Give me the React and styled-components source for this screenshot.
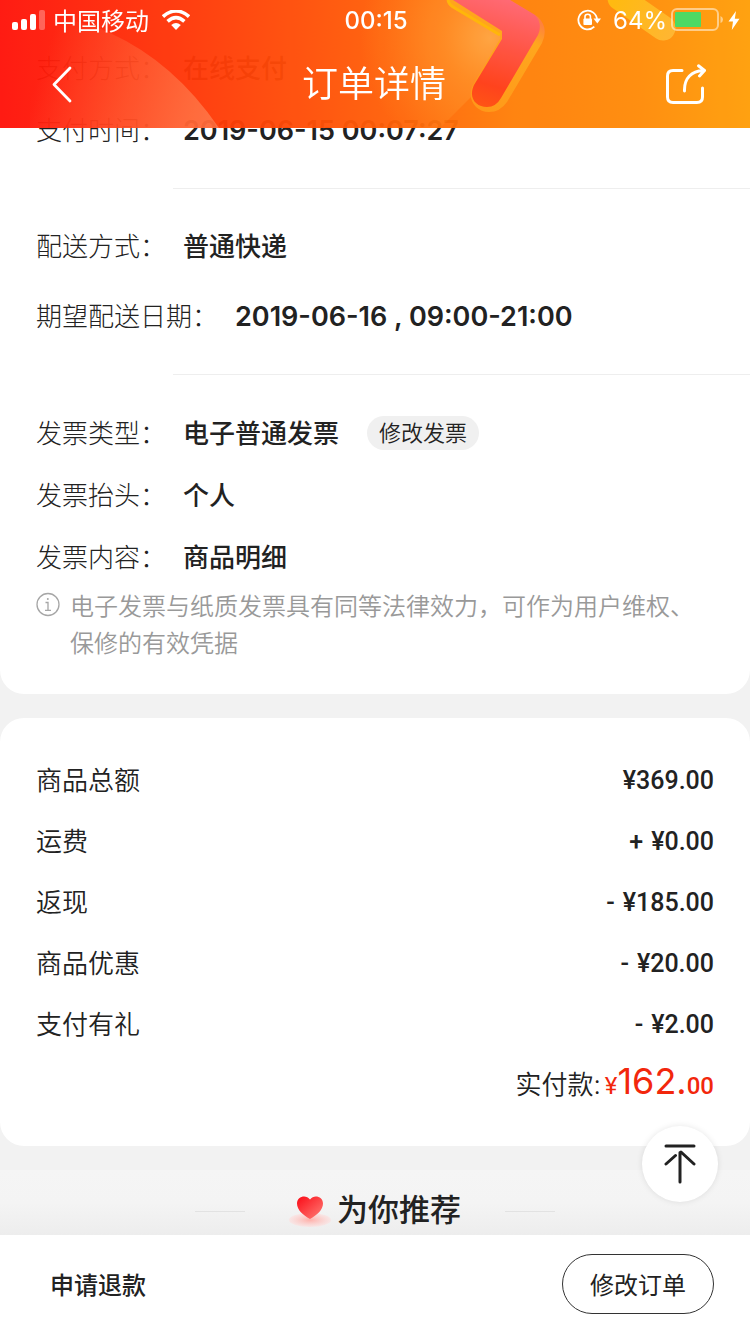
import React from 'react'
import styled, { createGlobalStyle, css } from 'styled-components'

const GlobalStyle = createGlobalStyle`
  * {
    box-sizing: border-box;
  }

  body {
    margin: 0;
    background: #f2f2f2;
    color: #222;
    font-family: Inter, 'Noto Sans CJK SC', sans-serif;
    font-size: 26px;
  }

  button {
    padding: 0;
    border: 0;
    background: none;
    color: inherit;
    font: inherit;
  }
`

const Page = styled.div`
  display: flex;
  flex-direction: column;
  min-height: 100vh;
`

const Header = styled.header`
  position: fixed;
  top: 0;
  left: 0;
  right: 0;
  z-index: 2;
  color: #fff;
`

const Backdrop = styled.svg`
  position: absolute;
  inset: 0;
  width: 100%;
  height: 100%;
  opacity: 0.96;
`

const StatusBar = styled.div`
  position: relative;
  display: grid;
  grid-template-columns: 1fr auto 1fr;
  align-items: center;
  height: 40px;
  padding: 0 10px 0 12px;
  font-size: 24px;
`

const StatusGroup = styled.div`
  display: flex;
  align-items: center;
  justify-content: ${props => props.align};
  gap: ${props => props.gap};
`

const Carrier = styled.span`
  margin-right: 6px;
  padding-bottom: 2px;
`

const Clock = styled.time`
  font-size: 24px;
  font-weight: 500;
`

const Percent = styled.span`
  margin-left: 8px;
`

const NavBar = styled.div`
  position: relative;
  display: flex;
  align-items: center;
  justify-content: space-between;
  height: 88px;
  padding: 0 44px 0 42px;
`

const Title = styled.h1`
  margin: 0;
  font-size: 36px;
  font-weight: 350;
  line-height: 44px;
`

const IconButton = styled.button`
  display: flex;
  align-items: center;
  justify-content: center;
  width: 40px;
  height: 40px;
`

const Card = styled.section`
  background: #fff;
  border-radius: 24px;
  padding: 32px 0 35px;
`

const DetailCard = styled(Card)`
  margin-bottom: 24px;
  border-top-left-radius: 0;
  border-top-right-radius: 0;
  padding: 37px 0 32px;
`

const Group = styled.dl`
  margin: 0;
  padding: ${props => props.$pad};
`

const Row = styled.div`
  display: flex;
  align-items: center;
  height: ${props => (props.$tall ? '70px' : '62px')};
  padding: 0 36px;
`

const Label = styled.dt`
  margin-right: 17px;
  padding-bottom: 4px;
  font-weight: 300;
`

const Value = styled.dd`
  margin: 0;
  padding-bottom: ${props => (props.$numeric ? '0' : '4px')};
  font-size: ${props => (props.$numeric ? '27px' : '26px')};
  font-weight: ${props => (props.$numeric ? 600 : 500)};
`

const Divider = styled.hr`
  height: 1px;
  margin: 0 0 0 173px;
  border: 0;
  background: #eee;
`

const Pill = styled.button`
  height: 34px;
  margin-left: 28px;
  padding: 0 12px;
  border-radius: 17px;
  background: #f0f0f0;
  font-size: 22px;
  font-weight: 350;
  line-height: 34px;
`

const Note = styled.div`
  display: flex;
  gap: 10px;
  padding: 0 36px;
  color: #999;
  font-size: 24px;
  font-weight: 350;
  line-height: 37px;

  svg {
    flex: none;
    margin-top: 4px;
  }

  p {
    margin: 0;
  }
`

const Prices = styled.dl`
  margin: 0;
`

const PriceRow = styled.div`
  display: flex;
  align-items: center;
  justify-content: space-between;
  height: 61px;
  padding: 0 36px;
`

const PriceLabel = styled.dt`
  padding-bottom: 4px;
  font-weight: 350;
`

const priceFont = css`
  font-family: Roboto, 'Noto Sans CJK SC', sans-serif;
`

const Amount = styled.dd`
  ${priceFont} display: flex;
  gap: 8px;
  margin: 0;
  font-size: 25px;
  font-weight: 500;
`

const TotalRow = styled.div`
  display: flex;
  align-items: baseline;
  justify-content: flex-end;
  gap: 4px;
  height: 56px;
  padding: 0 36px;
  line-height: 52px;
`

const Total = styled.dd`
  ${priceFont} margin: 0;
  color: #f2270c;
  font-size: 24px;
`

const TotalInt = styled.span`
  font-family: Inter, sans-serif;
  font-size: 36px;
`

const TotalCents = styled.span`
  font-weight: 500;
`

const Recommend = styled.section`
  display: flex;
  flex: 1;
  align-items: flex-start;
  justify-content: center;
  gap: 44px;
  min-height: 65px;
  margin-top: 24px;
  padding-top: 20px;
  background: linear-gradient(#f5f5f5, #f4f4f4 50%, #ededed);
`

const Rule = styled.span`
  width: 50px;
  height: 1px;
  margin-top: 21px;
  background: #e2e2e2;
`

const RecommendTitle = styled.h2`
  display: flex;
  align-items: center;
  gap: 4px;
  margin: 0;
  font-size: 31px;
  font-weight: 500;
  line-height: 40px;
`

const Footer = styled.footer`
  position: sticky;
  bottom: 0;
  display: flex;
  align-items: center;
  justify-content: space-between;
  height: 99px;
  padding: 0 36px 2px 50px;
  background: #fff;
  font-size: 24px;
`

const RefundButton = styled.button`
  font-weight: 500;
`

const OutlineButton = styled.button`
  height: 60px;
  padding: 0 27px;
  border: 1px solid #333;
  border-radius: 30px;
`

const TopButton = styled.button`
  position: fixed;
  right: 32px;
  bottom: 132px;
  z-index: 1;
  display: flex;
  align-items: center;
  justify-content: center;
  width: 76px;
  height: 76px;
  border-radius: 50%;
  background: #fff;
  box-shadow: 0 0 6px rgba(0, 0, 0, 0.1);
`

const HeaderArt = () => (
  <Backdrop viewBox="0 0 750 128" preserveAspectRatio="none" aria-hidden="true">
    <defs>
      <linearGradient id="sky" gradientUnits="userSpaceOnUse" x1="0" y1="70" x2="750" y2="30">
        <stop offset="0" stopColor="#ff120a" />
        <stop offset="0.2" stopColor="#ff3008" />
        <stop offset="0.38" stopColor="#ff4b08" />
        <stop offset="0.54" stopColor="#ff6408" />
        <stop offset="0.68" stopColor="#ff7f08" />
        <stop offset="0.85" stopColor="#ff8b08" />
        <stop offset="1" stopColor="#ff9f08" />
      </linearGradient>
      <radialGradient id="glow" gradientUnits="userSpaceOnUse" cx="490" cy="38" r="130">
        <stop offset="0" stopColor="#ffa23c" />
        <stop offset="0.35" stopColor="#ff9428" stopOpacity="0.65" />
        <stop offset="1" stopColor="#ff8a18" stopOpacity="0" />
      </radialGradient>
      <linearGradient id="orb" gradientUnits="userSpaceOnUse" x1="40" y1="70" x2="205" y2="128">
        <stop offset="0" stopColor="#ff7a4a" stopOpacity="0" />
        <stop offset="1" stopColor="#ff7a4a" stopOpacity="0.75" />
      </linearGradient>
      <linearGradient id="arm" gradientUnits="userSpaceOnUse" x1="510" y1="0" x2="480" y2="105">
        <stop offset="0" stopColor="#ff6470" />
        <stop offset="0.4" stopColor="#ff5040" />
        <stop offset="0.8" stopColor="#ff3c14" />
        <stop offset="1" stopColor="#ff4c0c" />
      </linearGradient>
      <linearGradient id="bevel" gradientUnits="userSpaceOnUse" x1="545" y1="15" x2="480" y2="112">
        <stop offset="0" stopColor="#ff6a48" />
        <stop offset="0.25" stopColor="#ffa414" />
        <stop offset="1" stopColor="#ff9410" />
      </linearGradient>
      <linearGradient id="capsule" gradientUnits="userSpaceOnUse" x1="615" y1="0" x2="672" y2="36">
        <stop offset="0" stopColor="#ffb808" />
        <stop offset="1" stopColor="#ffb42a" />
      </linearGradient>
    </defs>
    <rect width="750" height="128" fill="url(#sky)" />
    <path d="M350 0H510V36L478 90L440 128H350Z" fill="url(#glow)" />
    <path d="M30 128V20Q70 14 110 33Q174 62 219 128Z" fill="url(#orb)" />
    <path
      d="M447 0C448 5 450 7 454 9L500 35V39L473 85C466 99 476 112 489 112Q500 112 507 102L542 43Q549 28 538 17L510 0Z"
      fill="url(#bevel)"
    />
    <path d="M448 0Q449 5 455 8L500 35" fill="none" stroke="#ffb400" strokeWidth="3" />
    <path
      d="M453 0L502 31V39L474 85C468 98 476 107 487 107Q496 107 501 98L538 35Q543 24 535 15L510 0Z"
      fill="url(#arm)"
    />
    <path d="M620 -2L663 28" stroke="url(#capsule)" strokeWidth="25" strokeLinecap="round" />
  </Backdrop>
)

const SignalIcon = () => (
  <svg width="34" height="20" viewBox="0 0 34 20" fill="#fff" aria-hidden="true">
    <rect x="0" y="12" width="6" height="8" rx="2" />
    <rect x="9" y="9" width="6" height="11" rx="2" />
    <rect x="18" y="4" width="6" height="16" rx="2" />
    <rect x="27" y="0" width="6" height="20" rx="2" opacity="0.3" />
  </svg>
)

const WifiIcon = () => (
  <svg width="28" height="20" viewBox="0 0 28 20" fill="none" stroke="#fff" aria-hidden="true">
    <path d="M1 6.6Q14 -4.6 27 6.6" strokeWidth="3.6" />
    <path d="M5.6 11.4Q14 4 22.4 11.4" strokeWidth="3.6" />
    <path d="M9.2 15Q14 11 18.8 15L14 20Z" fill="#fff" stroke="none" />
  </svg>
)

const LockIcon = () => (
  <svg width="24" height="22" viewBox="0 0 24 22" fill="none" stroke="#fff" aria-hidden="true">
    <path d="M20 11A9.3 9.3 0 1 0 17.3 17.6" strokeWidth="1.8" />
    <path d="M16.5 9.5H24L20.3 14.5Z" fill="#fff" stroke="none" />
    <rect x="6.4" y="9.5" width="8.6" height="6.5" rx="1" fill="#fff" stroke="none" />
    <path d="M8 10V7.6Q8 5.2 10.7 5.2T13.4 7.6V10" strokeWidth="1.6" />
  </svg>
)

const BatteryIcon = () => (
  <svg width="53" height="24" viewBox="0 0 53 24" aria-hidden="true">
    <rect x="1" y="1" width="46" height="21" rx="5" fill="none" stroke="#fff" strokeOpacity="0.5" strokeWidth="2" />
    <rect x="4" y="4" width="26" height="15" rx="1" fill="#4cd964" />
    <path d="M49.5 8Q52 9 52 11.5T49.5 15Z" fill="#fff" fillOpacity="0.5" />
  </svg>
)

const BoltIcon = () => (
  <svg width="12" height="19" viewBox="0 0 12 19" fill="#fff" aria-hidden="true">
    <path d="M8 0L0.5 10.5H5L3.8 19L11.5 7.8H6.8Z" />
  </svg>
)

const BackIcon = () => (
  <svg width="20" height="37" viewBox="0 0 20 37" fill="none" stroke="#fff" strokeWidth="2.8" strokeLinecap="round" strokeLinejoin="round">
    <path d="M18 2L2 18.5L18 35" />
  </svg>
)

const ShareIcon = () => (
  <svg width="40" height="40" viewBox="0 0 40 40" fill="none" stroke="#fff" strokeWidth="3" strokeLinecap="round" strokeLinejoin="round">
    <path d="M16 6.5H7Q1.5 6.5 1.5 12V33Q1.5 38.5 7 38.5H31Q36.5 38.5 36.5 33V24" />
    <path d="M18.5 27C18 14 26 7 37 6.5M32.5 1.8L38.5 6.5L33.5 12" />
  </svg>
)

const InfoIcon = () => (
  <svg width="24" height="25" viewBox="0 0 24 25" fill="none" stroke="#a6a6a6" strokeWidth="1.3" aria-hidden="true">
    <circle cx="12" cy="12.5" r="11" />
    <path d="M9.5 10.5H12V18M9 18.3H15" />
    <circle cx="11.8" cy="7" r="1" fill="#a6a6a6" stroke="none" />
  </svg>
)

const HeartIcon = () => (
  <svg width="44" height="36" viewBox="0 0 44 36" aria-hidden="true">
    <defs>
      <linearGradient id="heart" x1="0" y1="0" x2="1" y2="1">
        <stop offset="0.1" stopColor="#fb1620" />
        <stop offset="1" stopColor="#ff8078" />
      </linearGradient>
      <radialGradient id="puddle">
        <stop offset="0" stopColor="#ffb0aa" />
        <stop offset="1" stopColor="#fbe2e1" stopOpacity="0.7" />
      </radialGradient>
    </defs>
    <ellipse cx="21" cy="28" rx="21" ry="7" fill="url(#puddle)" />
    <path
      d="M21 27C14 23 8 18 8 11.5C8 4.5 17 2 21 7.500C25 2 34 4.5 34 11.5C34 18 28 23 21 27Z"
      fill="url(#heart)"
    />
  </svg>
)

const TopIcon = () => (
  <svg width="32" height="40" viewBox="0 0 32 40" fill="none" stroke="#222" strokeWidth="3" strokeLinecap="round">
    <path d="M2 2H30M16 8.5V38M17 8L30 20M11.5 11.5L2 20" />
  </svg>
)

const InfoRow = ({ label, children, tall, numeric, action }) => (
  <Row $tall={tall}>
    <Label>{label}：</Label>
    <Value $numeric={numeric}>{children}</Value>
    {action && <Pill type="button">{action}</Pill>}
  </Row>
)

const prices = [
  { label: '商品总额', amount: '¥369.00' },
  { label: '运费', sign: '+', amount: '¥0.00' },
  { label: '返现', sign: '-', amount: '¥185.00' },
  { label: '商品优惠', sign: '-', amount: '¥20.00' },
  { label: '支付有礼', sign: '-', amount: '¥2.00' }
]

const App = () => (
  <Page lang="zh-CN">
    <GlobalStyle />
    <Header>
      <HeaderArt />
      <StatusBar>
        <StatusGroup align="flex-start" gap="7px">
          <SignalIcon />
          <Carrier>中国移动</Carrier>
          <WifiIcon />
        </StatusGroup>
        <Clock>00:15</Clock>
        <StatusGroup align="flex-end" gap="4px">
          <LockIcon />
          <Percent>64%</Percent>
          <BatteryIcon />
          <BoltIcon />
        </StatusGroup>
      </StatusBar>
      <NavBar>
        <IconButton type="button" aria-label="返回">
          <BackIcon />
        </IconButton>
        <Title>订单详情</Title>
        <IconButton type="button" aria-label="分享">
          <ShareIcon />
        </IconButton>
      </NavBar>
    </Header>

    <DetailCard>
      <Group $pad="0 0 27px">
        <InfoRow label="支付方式">在线支付</InfoRow>
        <InfoRow label="支付时间" numeric>
          2019-06-15 00:07:27
        </InfoRow>
      </Group>
      <Divider />
      <Group $pad="22px 0 23px">
        <InfoRow label="配送方式" tall>
          普通快递
        </InfoRow>
        <InfoRow label="期望配送日期" tall numeric>
          2019-06-16 , 09:00-21:00
        </InfoRow>
      </Group>
      <Divider />
      <Group $pad="27px 0 0">
        <InfoRow label="发票类型" action="修改发票">
          电子普通发票
        </InfoRow>
        <InfoRow label="发票抬头">个人</InfoRow>
        <InfoRow label="发票内容">商品明细</InfoRow>
      </Group>
      <Note>
        <InfoIcon />
        <p>电子发票与纸质发票具有同等法律效力，可作为用户维权、保修的有效凭据</p>
      </Note>
    </DetailCard>

    <Card>
      <Prices>
        {prices.map(({ label, sign, amount }) => (
          <PriceRow key={label}>
            <PriceLabel>{label}</PriceLabel>
            <Amount>
              {sign && <span>{sign}</span>}
              <span>{amount}</span>
            </Amount>
          </PriceRow>
        ))}
        <TotalRow>
          <PriceLabel>实付款:</PriceLabel>
          <Total>
            ¥<TotalInt>162.</TotalInt>
            <TotalCents>00</TotalCents>
          </Total>
        </TotalRow>
      </Prices>
    </Card>

    <Recommend>
      <Rule />
      <RecommendTitle>
        <HeartIcon />
        为你推荐
      </RecommendTitle>
      <Rule />
    </Recommend>

    <TopButton type="button" aria-label="回到顶部">
      <TopIcon />
    </TopButton>

    <Footer>
      <RefundButton type="button">申请退款</RefundButton>
      <OutlineButton type="button">修改订单</OutlineButton>
    </Footer>
  </Page>
)

export default App
